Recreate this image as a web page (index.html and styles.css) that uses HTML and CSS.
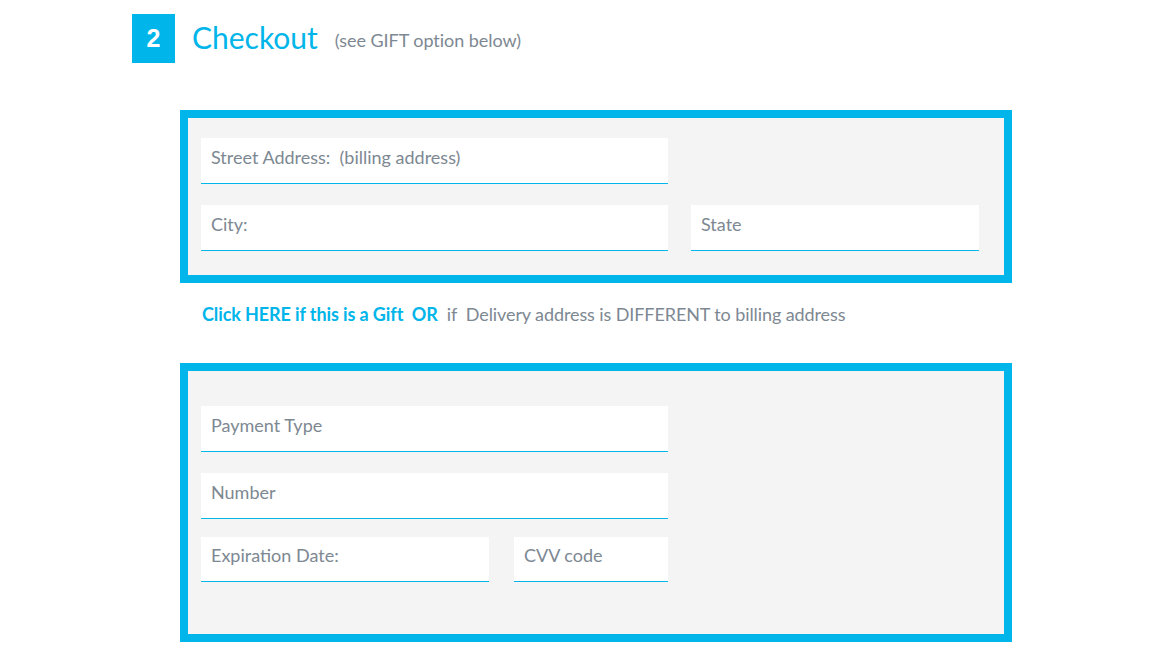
FILE: index.html
```html
<!DOCTYPE html>
<html lang="en">
<head>
<meta charset="utf-8">
<title>Checkout</title>
<link rel="stylesheet" href="styles.css">
</head>
<body>
<header class="step-head">
  <div class="step-num">2</div>
  <h1 class="step-title">Checkout</h1>
  <span class="step-note">(see GIFT option below)</span>
</header>

<main class="forms">
  <section class="panel panel-billing">
    <div class="grid-billing">
      <input class="field field-street" type="text" placeholder="Street Address:  (billing address)">
      <input class="field field-city" type="text" placeholder="City:">
      <input class="field field-state" type="text" placeholder="State">
    </div>
  </section>

  <p class="gift-line"><a class="gift-link" href="#">Click HERE if this is a Gift&nbsp; OR</a>&nbsp; if&nbsp; Delivery address is DIFFERENT to billing address</p>

  <section class="panel panel-payment">
    <div class="pay-col">
      <input class="field" type="text" placeholder="Payment Type">
      <input class="field field-number" type="text" placeholder="Number">
      <div class="pay-row">
        <input class="field field-exp" type="text" placeholder="Expiration Date:">
        <input class="field field-cvv" type="text" placeholder="CVV code">
      </div>
    </div>
  </section>
</main>
</body>
</html>
```

FILE: styles.css
```css
* { box-sizing: border-box; }

body {
  margin: 0;
  background: #ffffff;
  font-family: Lato, "Open Sans", Arial, sans-serif;
  color: #7d8892;
}

.step-head {
  display: flex;
  align-items: center;
  padding: 14px 0 0 132px;
  height: 63px;
}

.step-num {
  width: 43px;
  height: 49px;
  background: #00b5e9;
  color: #ffffff;
  font-family: "Liberation Sans", Arial, sans-serif;
  font-weight: 700;
  font-size: 25px;
  display: flex;
  align-items: center;
  justify-content: center;
}

.step-title {
  margin: 0 0 4px 17px;
  font-weight: 400;
  font-size: 30px;
  color: #00b5e9;
  line-height: 1;
}

.step-note {
  margin: 2px 0 0 17px;
  font-size: 18px;
  letter-spacing: -0.05px;
  color: #7d8892;
}

.forms {
  margin: 47px 0 0 180px;
  width: 832px;
}

.panel {
  border: 8px solid #00b5e9;
  background: #f4f4f4;
}

.panel-billing {
  padding: 20px 25px 24px 13px;
}

.grid-billing {
  display: grid;
  grid-template-columns: 467px 288px;
  column-gap: 23px;
  row-gap: 21px;
}

.field-street { grid-column: 1; }
.field-city { grid-column: 1; grid-row: 2; }
.field-state { grid-column: 2; grid-row: 2; }

.field {
  display: block;
  width: 100%;
  height: 46px;
  border: none;
  border-bottom: 1px solid #00b5e9;
  background: #ffffff;
  padding: 0 10px 8px;
  font-family: Lato, "Open Sans", Arial, sans-serif;
  font-size: 18px;
  color: #7d8892;
  outline: none;
}

.field::placeholder {
  color: #7d8892;
  opacity: 1;
}

.gift-line {
  margin: 21px 0 0 22px;
  height: 20px;
  line-height: 20px;
  font-size: 18px;
  letter-spacing: -0.1px;
  color: #7d8892;
}

.gift-link {
  color: #00b5e9;
  font-weight: 700;
  text-decoration: none;
}

.panel-payment {
  margin-top: 39px;
  padding: 35px 25px 52px 13px;
}

.pay-col {
  width: 467px;
  display: flex;
  flex-direction: column;
}

.field-number { margin-top: 21px; }

.pay-row {
  margin-top: 18px;
  display: flex;
  gap: 25px;
}

.field-exp { width: 288px; height: 45px; }
.field-cvv { width: 154px; height: 45px; }
```
